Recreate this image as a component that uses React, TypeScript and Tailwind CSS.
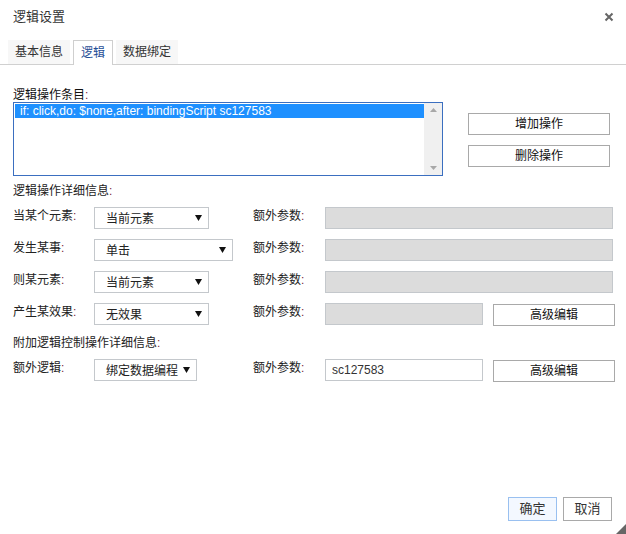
import React from "react";

const cjk = "font-['Liberation_Sans','Noto_Sans_CJK_SC',sans-serif]";

const Colon = () => <span className="text-[#7a1f3d]">:</span>;

const Caret = () => (
  <svg width="7" height="6" viewBox="0 0 7 6" className="shrink-0">
    <path d="M0 0 H7 L3.5 6 Z" fill="#111" />
  </svg>
);

const Select = ({ value, width }: { value: string; width: string }) => (
  <div
    className={`${width} h-[22px] border border-[#c4c8cc] bg-white flex items-center justify-between pl-[11px] pr-[6px]`}
  >
    <span className="text-[12px] text-[#222] pt-[2px]">{value}</span>
    <Caret />
  </div>
);

const Button = ({ label, width }: { label: string; width: string }) => (
  <button
    className={`${width} h-[22px] shrink-0 border border-[#a9a9a9] bg-white text-[12px] text-[#111] leading-none`}
  >
    {label}
  </button>
);

const ParamInput = ({ width, value }: { width: string; value?: string }) => (
  <div
    className={`${width} h-[22px] shrink-0 border border-[#c4c8cc] flex items-center px-[6px] text-[12px] ${
      value ? "bg-white text-[#333]" : "bg-[#dcdcdc]"
    }`}
  >
    {value}
  </div>
);

interface RowProps {
  label: string;
  value: string;
  selectWidth: string;
  inputWidth: string;
  inputValue?: string;
  withButton?: boolean;
}

const Row = ({ label, value, selectWidth, inputWidth, inputValue, withButton }: RowProps) => (
  <div className="flex items-center h-[22px]">
    <div className="w-[81px] shrink-0 text-[12px] text-[#222] -mt-[5px]">
      {label}
      <Colon />
    </div>
    <div className="w-[159px] shrink-0">
      <Select value={value} width={selectWidth} />
    </div>
    <div className="w-[72px] shrink-0 text-[12px] text-[#222] -mt-[5px]">
      额外参数
      <Colon />
    </div>
    <ParamInput width={inputWidth} value={inputValue} />
    {withButton && (
      <div className="ml-[10px] shrink-0">
        <Button label="高级编辑" width="w-[122px]" />
      </div>
    )}
  </div>
);

const App: React.FC = () => {
  return (
    <div className={`${cjk} relative w-[626px] h-[534px] bg-white flex flex-col overflow-hidden`}>
      <div className="h-[34px] flex items-center justify-between pl-[13px] pr-[12px]">
        <span className="text-[13px] text-[#333]">逻辑设置</span>
        <svg width="10" height="10" viewBox="0 0 10 10">
          <path d="M1.5 1.5 L8.5 8.5 M8.5 1.5 L1.5 8.5" stroke="#666" strokeWidth="2" />
        </svg>
      </div>

      <div className="mt-[7px] h-[24px] border-b border-[#d0d0d0] flex items-end pl-[8px] gap-[3px]">
        <div className="h-[24px] px-[7px] bg-[#f7f7f7] text-[12px] text-[#333] flex items-center">基本信息</div>
        <div className="h-[25px] -mb-px px-[7px] bg-white border border-b-0 border-[#cfcfcf] text-[12px] text-[#1f4e96] flex items-center">
          逻辑
        </div>
        <div className="h-[24px] px-[7px] bg-[#f7f7f7] text-[12px] text-[#333] flex items-center">数据绑定</div>
      </div>

      <div className="pl-[13px] pt-[23px]">
        <div className="h-[14px] text-[12px] text-[#111] leading-[14px]">
          逻辑操作条目
          <Colon />
        </div>
        <div className="flex">
          <div className="w-[430px] h-[74px] border border-[#3b6fc0] flex">
            <div className="flex-1 pt-[1px] pl-[1px]">
              <div className="h-[14px] bg-[#1e90ff] text-white text-[12px] leading-[14px] pl-[5px] font-['Liberation_Sans',sans-serif]">
                if: click,do: $none,after: bindingScript sc127583
              </div>
            </div>
            <div className="w-[18px] bg-[#f0f0f0] flex flex-col items-center justify-between py-[5px]">
              <svg width="7" height="4" viewBox="0 0 7 4">
                <path d="M0 4 H7 L3.5 0 Z" fill="#a8a8a8" />
              </svg>
              <svg width="7" height="4" viewBox="0 0 7 4">
                <path d="M0 0 H7 L3.5 4 Z" fill="#a8a8a8" />
              </svg>
            </div>
          </div>
          <div className="ml-[25px] pt-[11px] flex flex-col gap-[10px]">
            <Button label="增加操作" width="w-[142px]" />
            <Button label="删除操作" width="w-[142px]" />
          </div>
        </div>

        <div className="mt-[8px] h-[14px] text-[12px] text-[#222] leading-[14px]">
          逻辑操作详细信息
          <Colon />
        </div>
        <div className="mt-[9px] flex flex-col gap-[10px]">
          <Row label="当某个元素" value="当前元素" selectWidth="w-[115px]" inputWidth="w-[288px]" />
          <Row label="发生某事" value="单击" selectWidth="w-[139px]" inputWidth="w-[288px]" />
          <Row label="则某元素" value="当前元素" selectWidth="w-[115px]" inputWidth="w-[288px]" />
          <Row
            label="产生某效果"
            value="无效果"
            selectWidth="w-[115px]"
            inputWidth="w-[158px]"
            withButton
          />
        </div>

        <div className="mt-[11px] h-[14px] text-[12px] text-[#222] leading-[14px]">
          附加逻辑控制操作详细信息
          <Colon />
        </div>
        <div className="mt-[9px]">
          <Row
            label="额外逻辑"
            value="绑定数据编程"
            selectWidth="w-[103px]"
            inputWidth="w-[158px]"
            inputValue="sc127583"
            withButton
          />
        </div>
      </div>

      <div className="mt-auto mb-[13px] mr-[14px] flex justify-end gap-[6px]">
        <button className="w-[49px] h-[24px] border border-[#99c0f0] bg-[#f3f8ff] text-[13px] text-[#333]">
          确定
        </button>
        <button className="w-[49px] h-[24px] border border-[#a9a9a9] bg-white text-[13px] text-[#333]">
          取消
        </button>
      </div>

      <svg className="absolute right-0 bottom-0" width="10" height="10" viewBox="0 0 10 10">
        <path d="M10 0 L10 10 L0 10 Z" fill="#666" />
      </svg>
    </div>
  );
};

export default App;
